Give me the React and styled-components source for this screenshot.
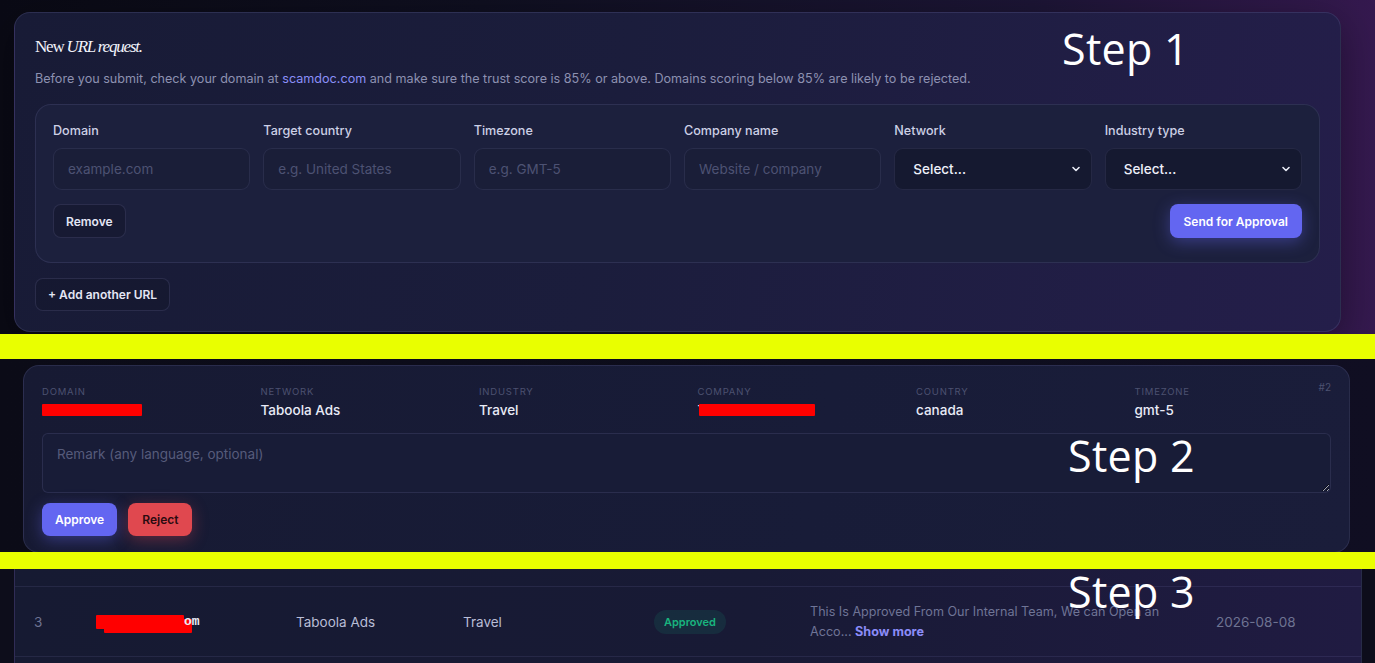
import React from "react";
import styled, { createGlobalStyle } from "styled-components";

const GlobalStyle = createGlobalStyle`
  html, body {
    margin: 0;
    padding: 0;
    background: #0b0b17;
  }
  body {
    font-family: Inter, "Noto Sans", sans-serif;
    -webkit-font-smoothing: antialiased;
  }
  * { box-sizing: border-box; }
`;

const fields = [
  { label: "Domain", placeholder: "example.com" },
  { label: "Target country", placeholder: "e.g. United States" },
  { label: "Timezone", placeholder: "e.g. GMT-5" },
  { label: "Company name", placeholder: "Website / company" },
  { label: "Network", select: true },
  { label: "Industry type", select: true },
];

const details = [
  { label: "Domain", redact: 100 },
  { label: "Network", value: "Taboola Ads" },
  { label: "Industry", value: "Travel" },
  { label: "Company", redact: 116, lead: "T" },
  { label: "Country", value: "canada" },
  { label: "Timezone", value: "gmt-5" },
];

function Chevron() {
  return (
    <svg width="10" height="10" viewBox="0 0 10 10">
      <path d="M2 3.5 L5 6.5 L8 3.5" fill="none" stroke="#e8eaf6" strokeWidth="1.6" strokeLinecap="round" strokeLinejoin="round" />
    </svg>
  );
}

function Field({ label, placeholder, select }) {
  return (
    <FieldCol>
      <FieldLabel>{label}</FieldLabel>
      {select ? (
        <SelectBox>
          <span>Select...</span>
          <Chevron />
        </SelectBox>
      ) : (
        <TextInput placeholder={placeholder} />
      )}
    </FieldCol>
  );
}

const App = () => {
  return (
    <>
      <GlobalStyle />
      <Page>
        <RequestStrip>
          <RequestCard>
            <Title>
              New <em>URL request.</em>
            </Title>
            <Hint>
              Before you submit, check your domain at <HintLink>scamdoc.com</HintLink> and make sure the trust score is 85% or above. Domains scoring below 85% are likely to be rejected.
            </Hint>
            <EntryCard>
              <FieldGrid>
                {fields.map((f) => (
                  <Field key={f.label} {...f} />
                ))}
              </FieldGrid>
              <EntryActions>
                <GhostButton>Remove</GhostButton>
                <PrimaryButton>Send for Approval</PrimaryButton>
              </EntryActions>
            </EntryCard>
            <GhostButton $wide>+ Add another URL</GhostButton>
          </RequestCard>
          <StepTag $top={27} $left={1062}>Step 1</StepTag>
        </RequestStrip>

        <Divider $h={25} />

        <ReviewStrip>
          <ReviewCard>
            <DetailRow>
              {details.map((d) => (
                <Detail key={d.label}>
                  <DetailLabel>{d.label}</DetailLabel>
                  {d.redact ? (
                    <DetailValue>
                      {d.lead}
                      <Redact $w={d.redact} $overlap={!!d.lead} />
                    </DetailValue>
                  ) : (
                    <DetailValue>{d.value}</DetailValue>
                  )}
                </Detail>
              ))}
              <Ordinal>#2</Ordinal>
            </DetailRow>
            <Remark placeholder="Remark (any language, optional)" />
            <ReviewActions>
              <PrimaryButton $small>Approve</PrimaryButton>
              <DangerButton>Reject</DangerButton>
            </ReviewActions>
          </ReviewCard>
          <StepTag $top={75} $left={1068}>Step 2</StepTag>
        </ReviewStrip>

        <Divider $h={17} />

        <TableStrip>
          <TableCard>
            <Row />
            <Row>
              <Cell $w={62} $muted>3</Cell>
              <Cell $w={200}>
                <DomainCell>
                  <Redact $w={88} $stack />
                  <Mono>om</Mono>
                </DomainCell>
              </Cell>
              <Cell $w={167}>Taboola Ads</Cell>
              <Cell $w={191}>Travel</Cell>
              <Cell $w={156}>
                <Badge>Approved</Badge>
              </Cell>
              <Cell $w={406}>
                <RemarkText>
                  This Is Approved From Our Internal Team, We can Open an
                  <br />
                  Acco... <ShowMore>Show more</ShowMore>
                </RemarkText>
              </Cell>
              <Cell $muted>2026-08-08</Cell>
            </Row>
            <Row />
          </TableCard>
          <StepTag $top={1} $left={1068}>Step 3</StepTag>
        </TableStrip>
      </Page>
    </>
  );
};

const Page = styled.div`
  width: 1375px;
  height: 663px;
  overflow: hidden;
  display: flex;
  flex-direction: column;
`;

const StepTag = styled.div`
  position: absolute;
  top: ${(p) => p.$top}px;
  left: ${(p) => p.$left}px;
  font-family: "Open Sans", "Noto Sans", sans-serif;
  font-size: 43px;
  line-height: 1;
  color: #ffffff;
  letter-spacing: 0.3px;
  pointer-events: none;
  z-index: 2;
`;

const Divider = styled.div`
  position: relative;
  z-index: 1;
  height: ${(p) => p.$h}px;
  flex-shrink: 0;
  background: #e9ff00;
`;

/* ---- new request form ---- */

const RequestStrip = styled.section`
  position: relative;
  height: 334px;
  flex-shrink: 0;
  padding: 12px 34px 0 14px;
  background: linear-gradient(90deg, #0a0a15 0%, #0f0f20 35%, #1c1535 75%, #35194f 100%);
`;

const RequestCard = styled.div`
  height: 320px;
  padding: 24px 20px 0 20px;
  border: 1px solid rgba(150, 150, 210, 0.16);
  border-radius: 16px;
  background: linear-gradient(100deg, #181b36 0%, #1b1d3c 45%, #241e4a 100%);
  box-shadow: 0 10px 40px rgba(0, 0, 0, 0.35);
`;

const Title = styled.h2`
  margin: 0;
  font-family: "Liberation Serif", serif;
  font-weight: 400;
  font-size: 17px;
  line-height: 20px;
  letter-spacing: -1.2px;
  color: #f2f3fb;
  em {
    font-style: italic;
  }
`;

const Hint = styled.p`
  margin: 14px 0 0;
  font-size: 12.6px;
  line-height: 16px;
  color: #8d91b1;
`;

const HintLink = styled.span`
  color: #8b8ff7;
`;

const EntryCard = styled.div`
  margin-top: 17px;
  padding: 18px 17px 24px;
  border: 1px solid rgba(150, 150, 210, 0.14);
  border-radius: 16px;
  background: #1c203d;
`;

const FieldGrid = styled.div`
  display: grid;
  grid-template-columns: repeat(6, 1fr);
  gap: 13px;
`;

const FieldCol = styled.div`
  display: flex;
  flex-direction: column;
  gap: 9px;
`;

const FieldLabel = styled.label`
  font-size: 12.6px;
  font-weight: 500;
  line-height: 16px;
  color: #cdd0e6;
`;

const TextInput = styled.input`
  height: 42px;
  width: 100%;
  padding: 0 14px;
  border: 1px solid rgba(150, 150, 210, 0.13);
  border-radius: 9px;
  background: #1a1e38;
  font-family: inherit;
  font-size: 13.5px;
  color: #e8eaf6;
  outline: none;
  &::placeholder {
    color: #4d5273;
  }
`;

const SelectBox = styled.div`
  height: 42px;
  display: flex;
  align-items: center;
  justify-content: space-between;
  padding: 0 10px 0 18px;
  border: 1px solid rgba(150, 150, 210, 0.13);
  border-radius: 9px;
  background: #151930;
  font-size: 13.5px;
  font-weight: 500;
  color: #eef0fa;
`;

const EntryActions = styled.div`
  display: flex;
  justify-content: space-between;
  margin-top: 14px;
`;

const GhostButton = styled.button`
  height: ${(p) => (p.$wide ? 33 : 34)}px;
  margin-top: ${(p) => (p.$wide ? 15 : 0)}px;
  padding: 0 12px;
  border: 1px solid rgba(150, 150, 210, 0.16);
  border-radius: 8px;
  background: rgba(20, 23, 45, 0.6);
  font-family: inherit;
  font-size: 12px;
  font-weight: 600;
  color: #e4e6f5;
`;

const PrimaryButton = styled.button`
  height: ${(p) => (p.$small ? 33 : 34)}px;
  padding: 0 ${(p) => (p.$small ? 13 : 14)}px;
  border: none;
  border-radius: 8px;
  background: #6366f1;
  font-family: inherit;
  font-size: 12px;
  font-weight: 600;
  color: #ffffff;
  box-shadow: 0 4px 16px rgba(99, 102, 241, 0.4);
`;

const DangerButton = styled.button`
  height: 33px;
  padding: 0 14px;
  border: none;
  border-radius: 8px;
  background: #e0484f;
  font-family: inherit;
  font-size: 12px;
  font-weight: 600;
  color: #2a0b10;
  box-shadow: 0 4px 16px rgba(224, 72, 79, 0.35);
`;

/* ---- review card ---- */

const ReviewStrip = styled.section`
  position: relative;
  height: 193px;
  flex-shrink: 0;
  overflow: hidden;
  padding: 6px 25px 0 23px;
  background: linear-gradient(90deg, #0b0b17 0%, #0d0d1c 60%, #100e22 100%);
`;

const ReviewCard = styled.div`
  padding: 20px 18px 16px 18px;
  border: 1px solid rgba(150, 150, 210, 0.15);
  border-radius: 16px;
  background: linear-gradient(100deg, #171a33 0%, #181c38 60%, #1a1d3a 100%);
`;

const DetailRow = styled.div`
  display: grid;
  grid-template-columns: repeat(5, 218.5px) 1fr auto;
`;

const Detail = styled.div`
  display: flex;
  flex-direction: column;
  gap: 3px;
`;

const DetailLabel = styled.span`
  font-size: 9.5px;
  line-height: 12px;
  letter-spacing: 0.8px;
  text-transform: uppercase;
  color: #4c5170;
`;

const DetailValue = styled.span`
  display: flex;
  align-items: center;
  height: 18px;
  font-size: 13.5px;
  font-weight: 500;
  color: #e9ebf7;
`;

const Redact = styled.span`
  display: inline-block;
  width: ${(p) => p.$w}px;
  height: ${(p) => (p.$stack ? 14 : 12)}px;
  margin-left: ${(p) => (p.$overlap ? -7 : 0)}px;
  background: #ff0000;
  border-radius: 1px;
  box-shadow: ${(p) => (p.$stack ? "8px 4px 0 #ff0000" : "none")};
`;

const Ordinal = styled.span`
  font-size: 10px;
  color: #4c5170;
  margin-top: -5px;
`;

const Remark = styled.textarea`
  display: block;
  width: 100%;
  height: 60px;
  margin-top: 14px;
  padding: 12px 14px;
  border: 1px solid rgba(150, 150, 210, 0.15);
  border-radius: 6px;
  background: #181c37;
  font-family: inherit;
  font-size: 13.5px;
  color: #e8eaf6;
  resize: vertical;
  outline: none;
  &::placeholder {
    color: #565b7b;
  }
`;

const ReviewActions = styled.div`
  display: flex;
  gap: 11px;
  margin-top: 10px;
`;

/* ---- history table ---- */

const TableStrip = styled.section`
  position: relative;
  flex: 1;
  overflow: hidden;
  padding: 0 13px 0 14px;
  background: #0d0d1b;
`;

const TableCard = styled.div`
  margin-top: -52px;
  border-left: 1px solid rgba(150, 150, 210, 0.14);
  border-right: 1px solid rgba(150, 150, 210, 0.14);
  background: linear-gradient(90deg, #161a32 0%, #181a35 55%, #201b42 100%);
`;

const Row = styled.div`
  display: flex;
  align-items: center;
  height: 70px;
  padding-left: 19px;
  border-bottom: 1px solid rgba(150, 150, 210, 0.12);
`;

const Cell = styled.div`
  flex: ${(p) => (p.$w ? `0 0 ${p.$w}px` : "1")};
  font-size: 13.5px;
  color: ${(p) => (p.$muted ? "#6e7392" : "#b9bdd6")};
`;

const DomainCell = styled.div`
  display: flex;
  align-items: center;
`;

const Mono = styled.span`
  font-family: "Liberation Mono", monospace;
  font-weight: 700;
  font-size: 13px;
  color: #e9ebf7;
`;

const Badge = styled.span`
  display: inline-block;
  padding: 5px 10px;
  border-radius: 999px;
  background: rgba(16, 185, 129, 0.12);
  font-size: 11px;
  font-weight: 600;
  color: #19b47e;
`;

const RemarkText = styled.div`
  font-size: 12.6px;
  line-height: 20px;
  color: #6f7496;
`;

const ShowMore = styled.span`
  font-weight: 700;
  color: #8b8cf8;
`;

export default App;
